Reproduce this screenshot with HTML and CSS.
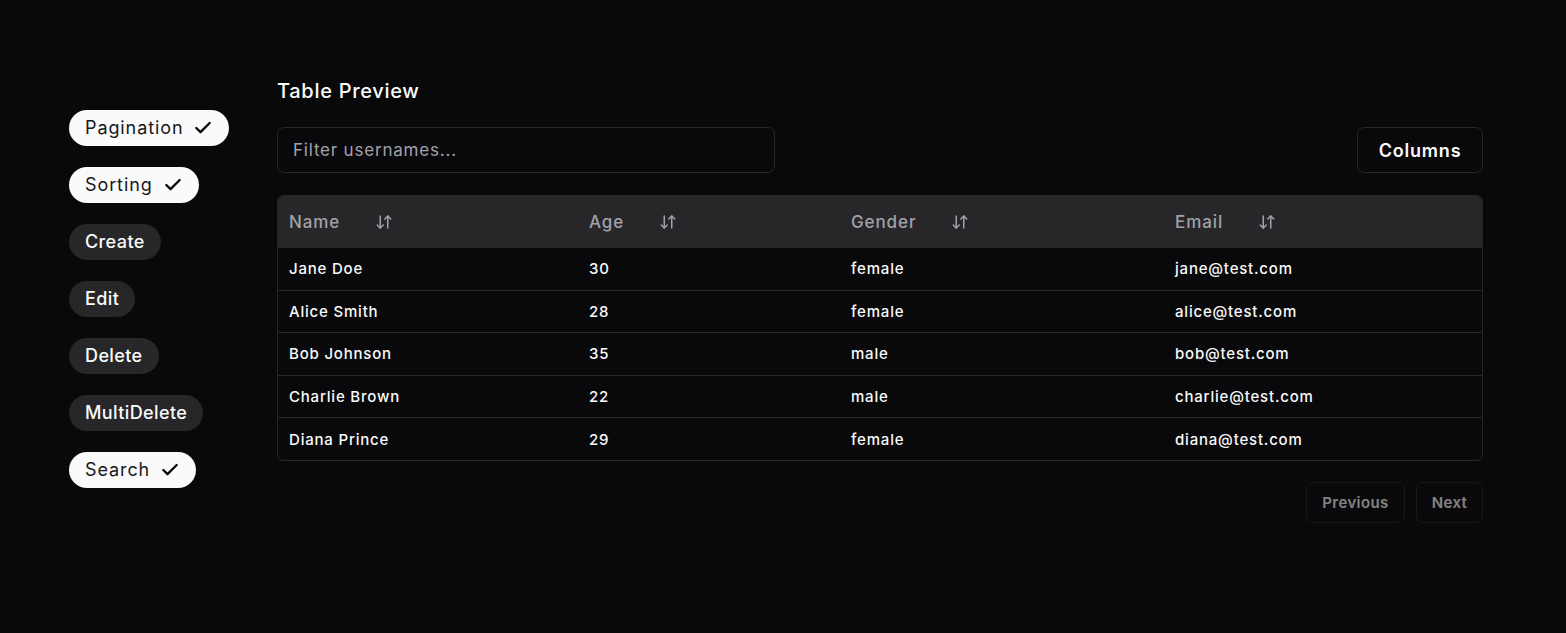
FILE: index.html
```html
<!DOCTYPE html>
<html>
<head>
<meta charset="utf-8">
<link rel="stylesheet" href="styles.css">
</head>
<body>
<div class="page">
  <aside class="sidebar">
    <span class="pill active">Pagination <svg class="check" viewBox="0 0 24 24"><path d="M20 6 9 17l-5-5"/></svg></span>
    <span class="pill active">Sorting <svg class="check" viewBox="0 0 24 24"><path d="M20 6 9 17l-5-5"/></svg></span>
    <span class="pill">Create</span>
    <span class="pill">Edit</span>
    <span class="pill">Delete</span>
    <span class="pill">MultiDelete</span>
    <span class="pill active">Search <svg class="check" viewBox="0 0 24 24"><path d="M20 6 9 17l-5-5"/></svg></span>
  </aside>
  <main class="main">
    <h2 class="title">Table Preview</h2>
    <div class="toolbar">
      <input class="filter" type="text" placeholder="Filter usernames...">
      <button class="btn columns">Columns</button>
    </div>
    <div class="table-wrap">
      <table class="table">
        <colgroup><col class="c1"><col class="c2"><col class="c3"><col class="c4"></colgroup>
        <thead>
          <tr>
            <th><span class="th-in">Name <svg class="sort" viewBox="0 0 24 24"><path d="m3 16 4 4 4-4"/><path d="M7 20V4"/><path d="m21 8-4-4-4 4"/><path d="M17 4v16"/></svg></span></th>
            <th><span class="th-in">Age <svg class="sort" viewBox="0 0 24 24"><path d="m3 16 4 4 4-4"/><path d="M7 20V4"/><path d="m21 8-4-4-4 4"/><path d="M17 4v16"/></svg></span></th>
            <th><span class="th-in">Gender <svg class="sort" viewBox="0 0 24 24"><path d="m3 16 4 4 4-4"/><path d="M7 20V4"/><path d="m21 8-4-4-4 4"/><path d="M17 4v16"/></svg></span></th>
            <th><span class="th-in">Email <svg class="sort" viewBox="0 0 24 24"><path d="m3 16 4 4 4-4"/><path d="M7 20V4"/><path d="m21 8-4-4-4 4"/><path d="M17 4v16"/></svg></span></th>
          </tr>
        </thead>
        <tbody>
          <tr><td>Jane Doe</td><td>30</td><td>female</td><td>jane@test.com</td></tr>
          <tr><td>Alice Smith</td><td>28</td><td>female</td><td>alice@test.com</td></tr>
          <tr><td>Bob Johnson</td><td>35</td><td>male</td><td>bob@test.com</td></tr>
          <tr><td>Charlie Brown</td><td>22</td><td>male</td><td>charlie@test.com</td></tr>
          <tr><td>Diana Prince</td><td>29</td><td>female</td><td>diana@test.com</td></tr>
        </tbody>
      </table>
    </div>
    <div class="pager">
      <button class="btn pg" disabled>Previous</button>
      <button class="btn pg" disabled>Next</button>
    </div>
  </main>
</div>
</body>
</html>
```
FILE: styles.css
```css
* { box-sizing: border-box; }
html, body { margin: 0; background: #09090b; }
body {
  font-family: Inter, "Open Sans", "Liberation Sans", sans-serif;
  color: #fafafa;
  height: 633px;
  overflow: hidden;
}
.page {
  display: flex;
  align-items: flex-start;
  padding: 77px 83px 0 69px;
}
.sidebar {
  width: 208px;
  flex: none;
  margin-top: 33px;
  display: flex;
  flex-direction: column;
  align-items: flex-start;
  gap: 21px;
}
.pill {
  display: inline-flex;
  align-items: center;
  height: 36px;
  padding: 0 16px 1px;
  border-radius: 18px;
  background: #27272a;
  color: #fafafa;
  font-size: 18px;
  letter-spacing: 0.4px;
  font-weight: 500;
}
.pill.active {
  background: #fafafa;
  color: #18181b;
  font-weight: 400;
  letter-spacing: 0.9px;
}
.check {
  width: 20px;
  height: 20px;
  margin-left: 10px;
  fill: none;
  stroke: #09090b;
  stroke-width: 2.8;
  stroke-linecap: round;
  stroke-linejoin: round;
}
.main { flex: 1; min-width: 0; }
.title {
  margin: 0;
  font-size: 20px;
  letter-spacing: 0.7px;
  line-height: 28px;
  font-weight: 500;
  color: #fafafa;
}
.toolbar {
  margin-top: 22px;
  display: flex;
  justify-content: space-between;
  align-items: center;
}
.filter {
  width: 498px;
  height: 46px;
  background: #09090b;
  border: 1px solid #27272a;
  border-radius: 7px;
  padding: 0 15px;
  font-family: inherit;
  font-size: 17px;
  letter-spacing: 0.8px;
  color: #fafafa;
  outline: none;
}
.filter::placeholder { color: #a1a1aa; }
.btn {
  font-family: inherit;
  background: #09090b;
  border: 1px solid #27272a;
  border-radius: 7px;
  color: #fafafa;
}
.columns {
  width: 126px;
  height: 46px;
  font-size: 18px;
  letter-spacing: 0.8px;
  font-weight: 600;
}
.table-wrap {
  margin-top: 22px;
  border: 1px solid #27272a;
  border-radius: 6px;
  overflow: hidden;
}
.table {
  width: 100%;
  border-collapse: collapse;
  table-layout: fixed;
}
.c1 { width: 300px; }
.c2 { width: 262px; }
.c3 { width: 324px; }
.c4 { width: auto; }
th {
  background: #27272a;
  height: 52px;
  text-align: left;
  padding: 0 11px;
  font-size: 17px;
  letter-spacing: 0.9px;
  font-weight: 500;
  color: #a1a1aa;
}
.th-in { display: inline-flex; align-items: center; }
.sort {
  width: 18px;
  height: 18px;
  margin-left: 35px;
  fill: none;
  stroke: #a1a1aa;
  stroke-width: 2;
  stroke-linecap: round;
  stroke-linejoin: round;
}
td {
  height: 42.4px;
  padding: 0 11px;
  font-size: 15px;
  letter-spacing: 0.8px;
  font-weight: 500;
  color: #fafafa;
  border-top: 1px solid #27272a;
}
tbody tr:first-child td { border-top: none; }
.pager {
  margin-top: 21px;
  display: flex;
  justify-content: flex-end;
  gap: 11px;
}
.pg {
  height: 41px;
  padding: 0 10px;
  font-size: 15px;
  letter-spacing: 0.4px;
  font-weight: 600;
  color: #fafafa;
  opacity: 0.5;
  border-color: #27272a;
}
.pg:first-child { width: 99px; }
.pg:last-child { width: 67px; }
```
